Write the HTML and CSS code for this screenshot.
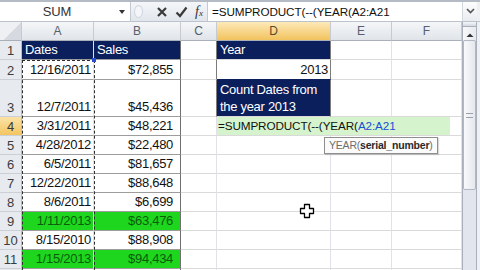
FILE: index.html
```html
<!DOCTYPE html>
<html lang="en">
<head>
  <meta charset="UTF-8">
  <meta name="viewport" content="width=device-width, initial-scale=1.0">
  <title>SUMPRODUCT YEAR count</title>
  <link rel="stylesheet" href="styles.css">
</head>
<body>
  <div class="formula-bar">
    <div class="name-box">
      <span class="name">SUM</span>
      <svg class="drop" width="16" height="19" viewBox="0 0 16 19"><path d="M5 8h6l-3 4z" fill="#333"/></svg>
    </div>
    <div class="fx-buttons">
      <span class="grip"></span>
      <svg width="12" height="12" viewBox="0 0 12 12"><path d="M2 2l8 8M10 2l-8 8" stroke="#3a3a3a" stroke-width="2.2"/></svg>
      <svg width="13" height="12" viewBox="0 0 13 12"><path d="M1.5 6.5l3.5 3.5 6.5-8.5" stroke="#3a3a3a" stroke-width="2.2" fill="none"/></svg>
      <span class="fx">f<small>x</small></span>
    </div>
    <div class="formula-input">=SUMPRODUCT(--(YEAR(A2:A21</div>
    <div class="expand">
      <svg width="15" height="19" viewBox="0 0 15 19"><path d="M4 7l3.5 3.5L11 7" stroke="#555" stroke-width="1.6" fill="none"/></svg>
    </div>
    <div class="bar-edge"></div>
  </div>

  <div class="sheet">
    <table class="grid">
      <colgroup>
        <col style="width:22px"><col style="width:72px"><col style="width:87px"><col style="width:36px">
        <col style="width:114px"><col style="width:61px"><col style="width:70px">
      </colgroup>
      <tr class="col-heads">
        <th class="corner"></th><th>A</th><th>B</th><th>C</th><th class="active">D</th><th>E</th><th>F</th>
      </tr>
      <tr>
        <th>1</th><td class="navy tbl">Dates</td><td class="navy tbl b">Sales</td><td class="boxed"></td>
        <td class="navy boxed">Year</td><td></td><td></td>
      </tr>
      <tr class="r2">
        <th>2</th><td class="num tbl">12/16/2011</td><td class="num tbl b">$72,855</td><td class="boxed"></td>
        <td class="num boxed dline">2013</td><td></td><td></td>
      </tr>
      <tr class="r3">
        <th>3</th><td class="num tbl">12/7/2011</td><td class="num tbl b">$45,436</td><td class="boxed"></td>
        <td class="navy boxed wrap">Count Dates from the year 2013</td><td></td><td></td>
      </tr>
      <tr>
        <th class="active">4</th><td class="num tbl">3/31/2011</td><td class="num tbl b">$48,221</td><td></td>
        <td colspan="3" class="edit-cell"><div class="editor">=SUMPRODUCT(--(YEAR(<span class="ref">A2:A21</span></div></td>
      </tr>
      <tr>
        <th>5</th><td class="num tbl">4/28/2012</td><td class="num tbl b">$22,480</td><td></td><td></td><td></td><td></td>
      </tr>
      <tr>
        <th>6</th><td class="num tbl">6/5/2011</td><td class="num tbl b">$81,657</td><td></td><td></td><td></td><td></td>
      </tr>
      <tr>
        <th>7</th><td class="num tbl">12/22/2011</td><td class="num tbl b">$88,648</td><td></td><td></td><td></td><td></td>
      </tr>
      <tr>
        <th>8</th><td class="num tbl">8/6/2011</td><td class="num tbl b">$6,699</td><td></td><td></td><td></td><td></td>
      </tr>
      <tr>
        <th>9</th><td class="num tbl hit">1/11/2013</td><td class="num tbl b hit">$63,476</td><td></td><td></td><td></td><td></td>
      </tr>
      <tr>
        <th>10</th><td class="num tbl">8/15/2010</td><td class="num tbl b">$88,908</td><td></td><td></td><td></td><td></td>
      </tr>
      <tr>
        <th>11</th><td class="num tbl hit">1/15/2013</td><td class="num tbl b hit">$94,434</td><td></td><td></td><td></td><td></td>
      </tr>
      <tr>
        <th></th><td class="num tbl"></td><td class="num tbl b"></td><td></td><td></td><td></td><td></td>
      </tr>
    </table>

    <div class="scrollbar">
      <div class="split"></div>
      <div class="btn-up"><svg width="14" height="12" viewBox="0 0 14 12"><path d="M3.5 8h7L7 4.5z" fill="#333"/></svg></div>
      <div class="thumb"><span class="thumb-grip"></span></div>
      <div class="track"></div>
    </div>
    <div class="bar-edge"></div>

    <!-- copy marquee and range handle over column A -->
    <div class="marquee"></div>
    <span class="handle"></span>

    <div class="tip">YEAR(<b>serial_number</b>)</div>

    <svg class="cursor" width="16" height="16" viewBox="0 0 16 16">
      <path d="M5.5 1.5h5v4h4v5h-4v4h-5v-4h-4v-5h4z" fill="#fff" stroke="#000" stroke-width="1.3" stroke-linejoin="round"/>
    </svg>
  </div>
</body>
</html>
```

FILE: styles.css
```css
* {
  box-sizing: border-box;
}
body {
  margin: 0;
  width: 480px;
  height: 270px;
  overflow: hidden;
  background: #fff;
  font-family: "Liberation Sans", Arial, sans-serif;
  color: #111;
}

/* formula bar */
.formula-bar {
  display: flex;
  height: 22px;
  border-top: 2px solid #b4bbc5;
  border-bottom: 1px solid #bcc3cc;
  background: linear-gradient(#f4f6f9, #e1e6ec);
}
.name-box {
  width: 131px;
  display: flex;
  align-items: center;
  background: #fff;
  border-right: 1px solid #c3c9d1;
}
.name {
  flex: 1;
  text-align: center;
  font-size: 13px;
  color: #333;
  letter-spacing: -0.2px;
}
.fx-buttons {
  width: 76px;
  display: flex;
  align-items: center;
  gap: 7px;
  padding-left: 3px;
}
.grip {
  width: 9px;
  height: 13px;
  border-radius: 50%;
  border: 1px solid #cfd5dd;
  background: #f3f5f8;
  margin-right: 6px;
}
.fx {
  font-family: "Liberation Serif", serif;
  font-style: italic;
  font-size: 14px;
  color: #333;
}
.fx small {
  font-size: 9px;
}
.formula-input {
  flex: 1;
  background: #fff;
  border-left: 1px solid #c3c9d1;
  font-size: 11.7px;
  line-height: 19px;
  padding-left: 4px;
  letter-spacing: -0.1px;
  color: #111;
}
.expand {
  width: 15px;
  background: linear-gradient(#fdfdfe, #e9ecf1);
  border-left: 1px solid #d3d8df;
}
.bar-edge {
  width: 3px;
  background: #eef0f4;
}

/* sheet */
.sheet {
  position: relative;
  display: flex;
  height: 248px;
}
.grid {
  width: 462px;
  table-layout: fixed;
  border-collapse: separate;
  border-spacing: 0;
  flex: none;
  align-self: flex-start;
}
.grid tr {
  height: 19px;
}
.grid tr.r2 {
  height: 20px;
}
.grid tr.r3 {
  height: 37px;
}
.grid td {
  padding: 0 2px 1px 3px;
  border-right: 1px solid #e4e0ea;
  border-bottom: 1px solid #dadada;
  font-size: 13px;
  letter-spacing: -0.3px;
  vertical-align: bottom;
  white-space: nowrap;
  overflow: hidden;
  line-height: 16px;
}
.grid th {
  padding: 0;
  font-weight: normal;
  font-size: 13px;
  color: #3c3c3c;
  background: #e7eaee;
  border-right: 1px solid #b8bec7;
  border-bottom: 1px solid #ccd0d6;
  text-align: center;
  vertical-align: bottom;
  line-height: 17px;
}
.grid th.active {
  background: linear-gradient(#fbe3a6, #f3c561);
  color: #3a3a3a;
}
.col-heads th {
  font-size: 12px;
  color: #56606e;
  background: linear-gradient(#f5f6f8, #e0e4e9);
  border-bottom: 1px solid #a9b0ba;
  border-right: 1px solid #c6cbd2;
  vertical-align: middle;
}
.col-heads th.active {
  background: linear-gradient(#fde9b8, #f2c35e);
  color: #5a4a2a;
}
.col-heads th.corner {
  background: linear-gradient(135deg, #eef0f3 55%, #d6dae0 56%);
}

.num {
  text-align: right;
}
.tbl {
  border-bottom-color: #9d9d9d !important;
}
.grid td.b {
  border-right: 1px solid #6f6f6f;
  padding-right: 7px;
}
.navy {
  background: #0c1f5d;
  color: #fff;
  text-align: left;
}
.grid td.boxed {
  border-right-color: #7c7c7c;
}
.grid td.dline {
  border-bottom-color: #0c1f5d;
}
.wrap {
  white-space: normal !important;
  line-height: 17px !important;
}
.hit {
  background: #1fd61f;
  color: #0b5d0b;
}
.edit-cell {
  padding: 0 !important;
}
.editor {
  width: 233px;
  height: 18px;
  background: #d5f4cd;
  font-size: 11.7px;
  line-height: 18px;
  padding-left: 1px;
  letter-spacing: -0.1px;
  color: #111;
}
.ref {
  color: #1a4fd6;
}

/* scroll bar */
.scrollbar {
  width: 15px;
  display: flex;
  flex-direction: column;
  background: #e2e5ee;
  border-left: 1px solid #a9b0bc;
  border-right: 1px solid #a9b0bc;
}
.split {
  height: 5px;
  background: linear-gradient(#f6f7f9, #d3d8e0);
  border-bottom: 1px solid #a9b0bc;
}
.btn-up {
  height: 13px;
  background: linear-gradient(90deg, #f7f8fa, #e7eaef);
}
.thumb {
  height: 150px;
  display: flex;
  align-items: center;
  justify-content: center;
  background: linear-gradient(90deg, #f8f9fb, #e4e7ed);
  border: 1px solid #b1b7c3;
  border-radius: 2px;
}
.thumb-grip {
  width: 7px;
  height: 5px;
  border-top: 1px solid #9aa1ad;
  border-bottom: 1px solid #9aa1ad;
}
.track {
  flex: 1;
}

/* overlays */
.marquee {
  position: absolute;
  left: 22px;
  top: 38px;
  width: 73px;
  height: 220px;
  border: 1px dashed #2e2e2e;
  border-bottom: none;
  pointer-events: none;
}
.handle {
  position: absolute;
  left: 92px;
  top: 36px;
  width: 4px;
  height: 4px;
  background: #2a4fd0;
}
.tip {
  position: absolute;
  left: 324px;
  top: 115px;
  height: 17px;
  padding: 0 4px;
  font-size: 10.5px;
  line-height: 15px;
  letter-spacing: -0.2px;
  color: #6d6d6d;
  background: #fbfbfb;
  border: 1px solid #8e8e8e;
  box-shadow: 1px 1px 1px rgba(0, 0, 0, 0.15);
}
.tip b {
  color: #2a2a2a;
}
.cursor {
  position: absolute;
  left: 299px;
  top: 181px;
}
```
